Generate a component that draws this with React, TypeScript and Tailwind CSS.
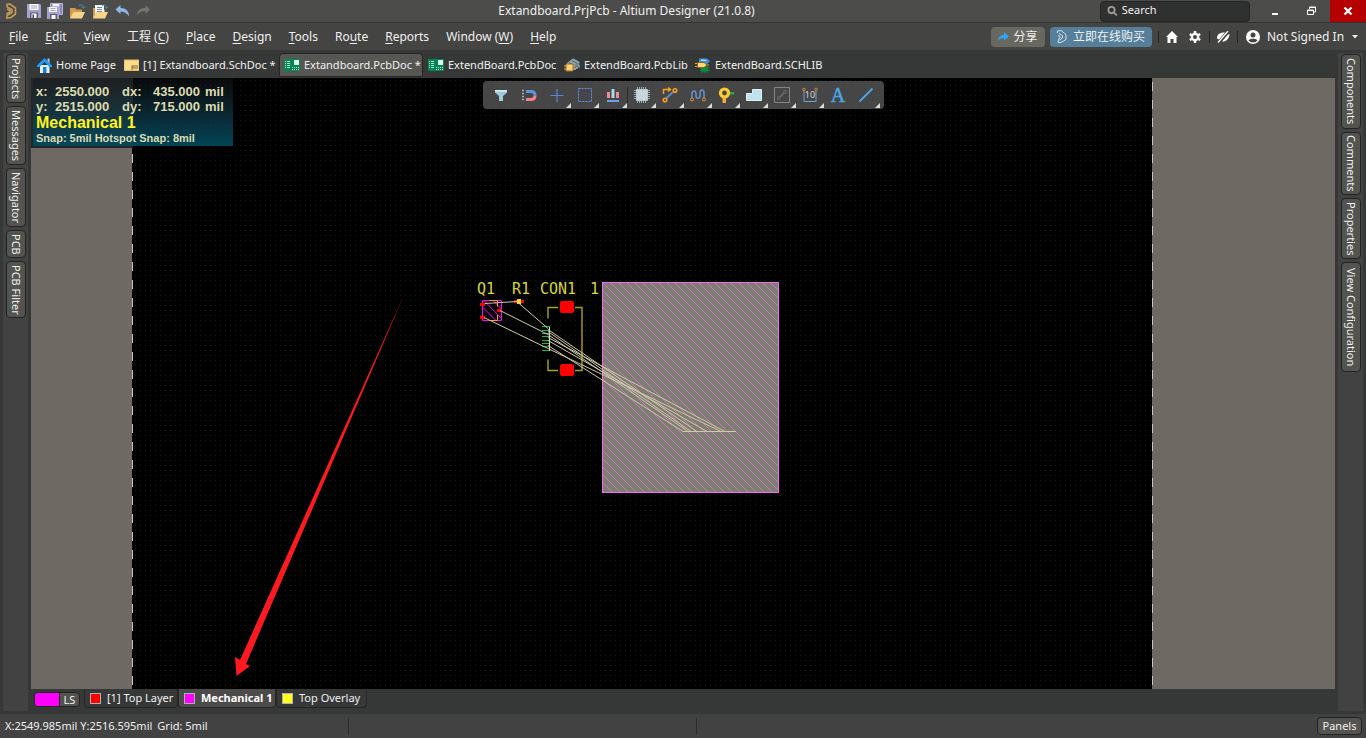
import { useState } from "react";
import type { ReactNode } from "react";
import clsx from "clsx";

const MENUS = [
  { pre: "", key: "F", post: "ile" },
  { pre: "", key: "E", post: "dit" },
  { pre: "", key: "V", post: "iew" },
  { pre: "工程 (", key: "C", post: ")" },
  { pre: "", key: "P", post: "lace" },
  { pre: "", key: "D", post: "esign" },
  { pre: "", key: "T", post: "ools" },
  { pre: "Ro", key: "u", post: "te" },
  { pre: "", key: "R", post: "eports" },
  { pre: "Window (", key: "W", post: ")" },
  { pre: "", key: "H", post: "elp" },
];

const LEFT_PANELS = [
  { label: "Projects", size: "h-[49px]" },
  { label: "Messages", size: "h-[59px]" },
  { label: "Navigator", size: "h-[59px]" },
  { label: "PCB", size: "h-[28px]" },
  { label: "PCB Filter", size: "h-[57px]" },
];

const RIGHT_PANELS = [
  { label: "Components", size: "h-[75px]" },
  { label: "Comments", size: "h-[63px]" },
  { label: "Properties", size: "h-[61px]" },
  { label: "View Configuration", size: "h-[110px]" },
];

const LAYERS = [
  { name: "[1] Top Layer", swatch: "bg-[#ff0000]", width: "w-[94px]" },
  { name: "Mechanical 1", swatch: "bg-[#ff00ff]", width: "w-[98px]" },
  { name: "Top Overlay", swatch: "bg-[#ffff1e]", width: "w-[91px]" },
];

/* ---------- title bar icons ---------- */

function AltiumLogo() {
  return (
    <svg width="12" height="16" viewBox="0 0 12 16" fill="none" stroke="#c69a57" strokeWidth="1.6">
      <path d="M2 4V1.500L5 1l5.500 4v6L6 14.500 2 15v-2.500l5-3V6.500L2 4" />
      <path d="M1.500 11l3.500-2V7.500L2 6" />
    </svg>
  );
}

function SaveIcon() {
  return (
    <svg width="14" height="14" viewBox="0 0 14 14">
      <path d="M0 0h13l1 1v13H0z" fill="#a3a1cf" />
      <path d="M2.500 0h9v6h-9z" fill="#f4f4f4" />
      <path d="M4 2h6M4 4h6" stroke="#a9a9b0" />
      <path d="M3 8.500h8V14H3z" fill="#5b5878" />
      <path d="M4.500 9.500h5V14h-5z" fill="#fff" />
      <path d="M5.500 10.500h1.500V14H5.500z" fill="#44415d" />
    </svg>
  );
}

function SaveAllIcon() {
  return (
    <svg width="16" height="16" viewBox="0 0 16 16">
      <path d="M3.500.5h12v11h-3V3.500h-9z" fill="#8886b8" stroke="#b7b5dc" />
      <path d="M5.500 1h7v2h-7z" fill="#f4f4f4" />
      <path d="M0 4h12v12H0z" fill="#a3a1cf" />
      <path d="M2 4h8v5H2z" fill="#f4f4f4" />
      <path d="M3.500 5.500h5M3.500 7.500h5" stroke="#a9a9b0" />
      <path d="M3 11h7v5H3z" fill="#5b5878" />
      <path d="M4.500 12h4v4h-4z" fill="#fff" />
    </svg>
  );
}

function FolderIcon({ withDoc = false }: { withDoc?: boolean }) {
  return (
    <svg width="17" height="15" viewBox="0 0 17 15">
      <path d="M1 4h5l1.500 1.500H13V14H1z" fill="#d79b4b" />
      {withDoc && (
        <>
          <path d="M3 1h9v9H3z" fill="#f5f5f5" />
          <path d="M5 3.500h5M5 5.500h5M5 7.500h5" stroke="#77889c" />
        </>
      )}
      <path d="M4.500 8H16l-3 6.500H1z" fill="#f7d488" />
      <path d="M10 1.500c3-1.500 4.500 0 4.500 2.500M12.500 3l2 1.500L16 2.500" fill="none" stroke="#4b8aa8" />
    </svg>
  );
}

function ArrowIcon({ redo = false }: { redo?: boolean }) {
  return (
    <svg width="15" height="12" viewBox="0 0 15 12">
      {redo ? (
        <path d="M14 4.500L9.500 0v3C4 3 1 5.500 1 10.500 3 7 6 6 9.500 6v3z" fill="#74746f" />
      ) : (
        <path d="M.5 4.500L5.500 0v3C11 3 14 6 14 11.500 12 8 9 6.500 5.500 6.500V9z" fill="#8fb9ec" />
      )}
    </svg>
  );
}

/* ---------- document tab icons ---------- */

function HomeTabIcon() {
  return (
    <svg width="15" height="15" viewBox="0 0 15 15">
      <path d="M10.500 0.500h2v5h-2z" fill="#b7c3cc" />
      <path d="M3 7h9.500v8H3z" fill="#dff0ff" />
      <path d="M7.500 0L0 7.500v1.500h2.500L7.500 4l5 5H15V7.500z" fill="#1d9bff" />
      <path d="M6 9h3.500v6H6z" fill="#1783e0" />
    </svg>
  );
}

function SchIcon() {
  return (
    <svg width="15" height="12" viewBox="0 0 15 12">
      <path d="M0 1h15v10.500H0z" fill="#f9dc8c" />
      <path d="M0 1h15v10.500H0z" fill="none" stroke="#e5b95f" />
      <path d="M8 7h6M8 9h6M8 6.500V11" stroke="#8a6b2c" />
    </svg>
  );
}

function PcbIcon() {
  return (
    <svg width="16" height="12" viewBox="0 0 16 12" shapeRendering="crispEdges">
      <path d="M0 0h16v12H0z" fill="#078456" />
      <path d="M1 2.500h1M3 2.500h3M1 4.500h1M3 4.500h3M1 6.500h1M3 6.500h3M1 8.500h1M3 8.500h3" stroke="#a5efc9" />
      <path d="M10 1h5v5h-5z" fill="#d8ffe9" />
      <path d="M8 8.500h1M10 8.500h1M12 8.500h1M14 8.500h1M8 10.500h1M10 10.500h1M12 10.500h1M14 10.500h1" stroke="#c0f8da" />
    </svg>
  );
}

function PcbLibIcon() {
  return (
    <svg width="16" height="14" viewBox="0 0 16 14">
      <path d="M3 5l6-4.500L15.500 4v3.500L9.500 11 3 8z" fill="#6f8792" />
      <path d="M3 5l6-4.500L15.500 4 9.500 7.500z" fill="#8fa5af" />
      <path d="M5 4.500l5 2.500M8 2.500l5 3" stroke="#4b5c64" />
      <path d="M11 10v2M13 9v2M15 7.500v2" stroke="#dfe8ec" />
      <path d="M2 6h7v7H2z" fill="#f8d27a" stroke="#9a6f23" />
      <path d="M0 8h2M0 11h2M9 8h2M9 11h2" stroke="#e6a93a" />
    </svg>
  );
}

function SchLibIcon() {
  return (
    <svg width="16" height="15" viewBox="0 0 16 15">
      <path d="M4 0.500h8l3 2.500-3 3H4z" fill="#3b8ee6" />
      <path d="M6 1.500h4l2 1.500H6z" fill="#b7dcff" />
      <path d="M6 8.500h7v5H6z" fill="#0c8a3f" />
      <path d="M5 10h10M5 12.500h10M7 7.500V15M9.500 7.500V15M12 7.500V15" stroke="#0c8a3f" />
      <path d="M2.500 4.500H9L12 7 9 9.500H2.500z" fill="#ffdb7a" stroke="#8e6315" />
      <path d="M0 5.500h2M0 8.500h2M12 7h2" stroke="#e6a93a" />
    </svg>
  );
}

const DOC_TABS: { name: string; icon: ReactNode; width: string }[] = [
  { name: "Home Page", icon: <HomeTabIcon />, width: "w-[87px]" },
  { name: "[1] Extandboard.SchDoc *", icon: <SchIcon />, width: "w-[160px]" },
  { name: "Extandboard.PcbDoc *", icon: <PcbIcon />, width: "w-[144px]" },
  { name: "ExtendBoard.PcbDoc", icon: <PcbIcon />, width: "w-[136px]" },
  { name: "ExtendBoard.PcbLib", icon: <PcbLibIcon />, width: "w-[131px]" },
  { name: "ExtendBoard.SCHLIB", icon: <SchLibIcon />, width: "w-[136px]" },
];

/* ---------- active bar ---------- */

const TOOLS: { label: string; more: boolean; art: ReactNode }[] = [
  {
    label: "Selection filter",
    more: false,
    art: (
      <>
        <path d="M2 3h12v2.500l-4 3.500v5H6V9L2 5.500z" fill="#9fcbd6" />
        <path d="M2 3h12v1.500H2z" fill="#d8f1f6" />
      </>
    ),
  },
  {
    label: "Snap",
    more: false,
    art: (
      <g fill="none">
        <path d="M1 3.500h2M1 6.500h2M1 9.500h2M1 12.500h2" stroke="#9db4bb" strokeWidth="1.500" />
        <path d="M5 4.500h5c4 0 4 3.500 4 4" stroke="#5f95de" strokeWidth="3" />
        <path d="M5 12.500h5c4 0 4-3.500 4-4" stroke="#ef8486" strokeWidth="3" />
      </g>
    ),
  },
  {
    label: "Move",
    more: true,
    art: <path d="M8 2v13M1.500 8.500h13M6 8.500h4M8 6.500v4" stroke="#5886d9" strokeWidth="1.200" />,
  },
  {
    label: "Select",
    more: true,
    art: <path d="M1.500 1.500h13v13h-13z" fill="none" stroke="#5f90ee" strokeDasharray="2 1" />,
  },
  {
    label: "Align",
    more: true,
    art: (
      <>
        <path d="M2 5h3v6H2zM11 5h3v6h-3z" fill="#f18a8c" />
        <path d="M6.500 2h3v9h-3z" fill="#a8dcea" />
        <path d="M2 13h12v2H2z" fill="#6e9ef0" />
      </>
    ),
  },
  {
    label: "Component",
    more: true,
    art: (
      <>
        <path
          d="M3.500 0v16M5.500 0v16M7.500 0v16M9.500 0v16M11.500 0v16M0 3.500h16M0 5.500h16M0 7.500h16M0 9.500h16M0 11.500h16"
          stroke="#8fb0ba"
        />
        <path d="M2.500 2.500h11v11h-11z" fill="#c9d5d8" stroke="#b5cad0" />
      </>
    ),
  },
  {
    label: "Route",
    more: true,
    art: (
      <g fill="none" stroke="#f5a11b" strokeWidth="1.500">
        <path d="M4.500 11L11 5" stroke="#5d89c0" strokeWidth="2" />
        <circle cx="3" cy="13" r="1.800" />
        <circle cx="13" cy="3.500" r="1.800" />
        <path d="M1.500 7V2.500h6M6 .5l2.500 2L6 4.500" />
      </g>
    ),
  },
  {
    label: "Tune length",
    more: true,
    art: (
      <g fill="none">
        <path d="M2 11V7c0-4 4-4 4 0v2c0 3 4 3 4 0V6c0-4 4-4 4 0v5" stroke="#6692d2" strokeWidth="1.500" />
        <circle cx="2" cy="12.500" r="1.500" stroke="#e2932f" />
        <circle cx="14" cy="12.500" r="1.500" stroke="#e2932f" />
      </g>
    ),
  },
  {
    label: "Via",
    more: true,
    art: (
      <>
        <path d="M10 5h6v2.500h-6z" fill="#2fa744" />
        <path d="M4.500 9h3.500v7H4.500z" fill="#f3a94b" />
        <circle cx="6.500" cy="6" r="4" fill="none" stroke="#ffcb2e" strokeWidth="3.200" />
      </>
    ),
  },
  {
    label: "Polygon",
    more: true,
    art: <path d="M.5 6.500h6v-4h9v11H.5z" fill="#bfe3ec" stroke="#dff3f7" />,
  },
  {
    label: "Room",
    more: true,
    art: (
      <g fill="none" stroke="#858585">
        <path d="M.5.5h15v15H.5z" />
        <path d="M6 10l4-4" stroke="#6e6e6e" strokeWidth="1.500" />
        <circle cx="4.800" cy="11.200" r="1.500" stroke="#6e6e6e" />
        <circle cx="11.200" cy="4.800" r="1.500" stroke="#6e6e6e" />
      </g>
    ),
  },
  {
    label: "Dimension",
    more: true,
    art: (
      <>
        <path d="M2 4v10.500h12V4" fill="none" stroke="#6d9fd8" />
        <circle cx="2" cy="2.500" r="1.300" fill="none" stroke="#d68c36" />
        <circle cx="14" cy="2.500" r="1.300" fill="none" stroke="#d68c36" />
        <text x="8" y="11" fontSize="9" textAnchor="middle" fill="#d6d6d6">
          10
        </text>
      </>
    ),
  },
  {
    label: "String",
    more: false,
    art: (
      <text
        x="8"
        y="15"
        fontSize="20"
        textAnchor="middle"
        fill="#4ba6e6"
        stroke="#4ba6e6"
        strokeWidth="0.500"
        className="font-['Liberation_Serif',serif]"
      >
        A
      </text>
    ),
  },
  {
    label: "Line",
    more: true,
    art: <path d="M1.500 14.500l13-13" stroke="#4ba6e6" strokeWidth="1.800" />,
  },
];

function ActiveBar() {
  return (
    <div className="absolute inset-x-0 top-[3px] flex justify-center">
      <div className="flex h-7 items-center rounded bg-[#464646] px-1">
        {TOOLS.map((tool, i) => (
          <div key={tool.label} className="flex h-full items-center">
            {i === 5 && <span className="h-4 w-px bg-[#2a2a2a]" />}
            <button type="button" aria-label={tool.label} className="relative flex h-full w-7 items-center justify-center">
              <svg width="16" height="16" viewBox="0 0 16 16" className="overflow-visible">
                {tool.art}
              </svg>
              {tool.more && (
                <svg width="5" height="5" viewBox="0 0 5 5" className="absolute right-0 bottom-px">
                  <path d="M5 0v5H0z" fill="#dcdcd4" />
                </svg>
              )}
            </button>
          </div>
        ))}
      </div>
    </div>
  );
}

/* ---------- board ---------- */

// ratsnest: connector pin end -> pad end
const RATS = [
  [485, 303, 517, 301],
  [518, 302, 548, 328],
  [500, 310, 548, 334],
  [484, 317, 548, 348],
  [548, 329, 697, 431],
  [548, 331, 691, 431],
  [548, 334, 688, 431],
  [548, 337, 725, 431],
  [548, 340, 707, 431],
  [548, 348, 721, 431],
  [548, 345, 683, 431],
  [683, 431, 736, 431],
];

const PINS = [326, 330, 333, 336, 340, 343, 346, 350];

function Board() {
  return (
    <svg
      width="1304"
      height="611"
      viewBox="31 78 1304 611"
      className="pointer-events-none absolute top-0 left-0 max-w-none font-['DejaVu_Sans_Mono',monospace]"
    >
      <defs>
        <pattern id="hatch" width="8" height="8" patternUnits="userSpaceOnUse">
          <path d="M-1 -1L9 9M-1 7L1 9M7 -1L9 1" stroke="#f27ced" strokeWidth="0.600" />
        </pattern>
      </defs>

      <rect x="602.5" y="282.5" width="176" height="210" fill="#7f7c74" />
      <rect x="602.5" y="282.5" width="176" height="210" fill="url(#hatch)" stroke="#f56cf0" />

      <g fill="#d8d436" fontSize="15">
        <text x="477" y="294">Q1</text>
        <text x="512" y="294">R1</text>
        <text x="540" y="294">CON1</text>
        <text x="590" y="294">1</text>
      </g>

      {/* Q1 */}
      <path
        d="M482.500 300.500h19v20h-19zM482.500 307l13.500 13.500M484 300.500l17.500 18M493 300.500l8.500 8.500"
        fill="none"
        stroke="#ff00ff"
      />
      <path d="M489 300.500h8.500v6M497.500 315v5.500h-8.500" fill="none" stroke="#f0a030" />
      <path d="M480 303h5v3h-5zM497 309h5v3h-5zM480 316h5v3h-5z" fill="#ff0000" />

      {/* R1 */}
      <path d="M514 300h10v3h-10z" fill="#ff0000" />
      <path d="M517 299h4v5h-4z" fill="#e8e030" />

      {/* CON1 */}
      <path
        d="M558 307.500h-10v11M575 307.500h7v63h-7M558 370.500h-10v-11"
        fill="none"
        stroke="#aaa21e"
        strokeWidth="1.400"
      />
      <rect x="560" y="301" width="14" height="12" rx="2" fill="#ff0000" />
      <rect x="560" y="364" width="14" height="12" rx="2" fill="#ff0000" />
      {PINS.map((y) => (
        <path key={y} d={`M542 ${y}.500h8`} stroke="#10c044" />
      ))}
      <path d="M549.500 327v24" stroke="#e8e2b4" />

      <g stroke="#cfcaa4">
        {RATS.map(([x1, y1, x2, y2], i) => (
          <path key={i} d={`M${x1} ${y1}.500L${x2} ${y2}.500`} />
        ))}
      </g>

      {/* arrow to the layer tabs */}
      <path d="M404 295L246 664l4 2-13.500 10L235 657l5 3z" fill="#ff1a20" />
    </svg>
  );
}

function HeadsUp() {
  return (
    <div className="absolute top-0 left-0 pr-px pb-0.5 pl-0.5">
      <div className="absolute inset-y-0 left-0 w-[102px] bg-[#262626]" />
      <div className="relative h-[68px] w-[200px] bg-linear-to-b from-[#101418]/40 to-[#004c60]/90 pt-1.5 pl-[3px] font-['Liberation_Sans',sans-serif] font-bold whitespace-nowrap text-[#dedbb0]">
        <div className="grid grid-cols-[19px_67px_31px_52px_auto] text-[13px] leading-[15px]">
          <span>x:</span>
          <span>2550.000</span>
          <span>dx:</span>
          <span>435.000</span>
          <span>mil</span>
          <span>y:</span>
          <span>2515.000</span>
          <span>dy:</span>
          <span>715.000</span>
          <span>mil</span>
        </div>
        <div className="text-base leading-[17px] text-[#fff31e]">Mechanical 1</div>
        <div className="text-[11px] leading-[14px]">Snap: 5mil Hotspot Snap: 8mil</div>
      </div>
    </div>
  );
}

function SidePanel({ panels }: { panels: { label: string; size: string }[] }) {
  return (
    <aside className="my-[3px] flex w-[25px] shrink-0 flex-col items-center gap-[3px] bg-[#424242] pt-px">
      {panels.map((panel) => (
        <button
          key={panel.label}
          type="button"
          className={clsx(
            "flex w-5 items-center justify-center rounded border border-[#232323] bg-[#53534f] text-[11px] leading-4 whitespace-nowrap [writing-mode:vertical-rl]",
            panel.size
          )}
        >
          {panel.label}
        </button>
      ))}
    </aside>
  );
}

export default function App() {
  const [activeDoc, setActiveDoc] = useState(2);
  const [activeLayer, setActiveLayer] = useState(1);

  return (
    <div className="flex min-h-screen flex-col overflow-hidden bg-[#363837] font-['Noto_Sans','Noto_Sans_CJK_SC',sans-serif] text-[#f0f0f0]">
      {/* Title bar */}
      <header className="flex h-[23px] items-center border-b border-[#333] bg-[#4c4c4a]">
        <div className="flex flex-1 items-center gap-2 pl-[5px]">
          <AltiumLogo />
          <div className="flex items-center gap-1.5 pl-0.5">
            <button type="button" aria-label="Save"><SaveIcon /></button>
            <button type="button" aria-label="Save all"><SaveAllIcon /></button>
            <button type="button" aria-label="Open"><FolderIcon /></button>
            <button type="button" aria-label="Open project"><FolderIcon withDoc /></button>
            <button type="button" aria-label="Undo"><ArrowIcon /></button>
            <button type="button" aria-label="Redo"><ArrowIcon redo /></button>
          </div>
        </div>
        <h1 className="pr-2 text-center text-xs whitespace-nowrap">Extandboard.PrjPcb - Altium Designer (21.0.8)</h1>
        <div className="flex h-full flex-1 items-center justify-end pl-[110px]">
          <label className="mr-[7px] flex h-[21px] w-[150px] items-center gap-1 rounded border border-[#252525] bg-[#2f3030] pl-1.5">
            <svg width="12" height="12" viewBox="0 0 12 12" fill="none" stroke="#a09c96" strokeWidth="2">
              <circle cx="5" cy="5" r="3.500" />
              <path d="M7.500 7.500l3.500 3.500" />
            </svg>
            <input
              type="text"
              aria-label="Search"
              placeholder="Search"
              className="w-full bg-transparent pb-px text-[11px] outline-none placeholder:text-[#f0f0f0]"
            />
          </label>
          <button type="button" aria-label="Minimize" className="flex h-full w-9 items-center justify-center">
            <svg width="12" height="12" viewBox="0 0 12 12"><path d="M3 8h6v2H3z" fill="#fff" /></svg>
          </button>
          <button type="button" aria-label="Restore" className="flex h-full w-[37px] items-center justify-center">
            <svg width="10" height="10" viewBox="0 0 10 10" fill="none" stroke="#fff">
              <path d="M2.500 3V1h6v5H7M2.500 1.500h6M.5 4h6v4.500h-6zM.5 4.500h6" />
            </svg>
          </button>
          <button type="button" aria-label="Close" className="flex h-full w-9 items-center justify-center bg-[#b50000]">
            <svg width="10" height="10" viewBox="0 0 10 10" stroke="#fff" strokeWidth="2.200">
              <path d="M1.500 1.500l7 7M8.500 1.500l-7 7" />
            </svg>
          </button>
        </div>
      </header>

      {/* Menu bar */}
      <nav className="flex h-[27px] items-center justify-between bg-[#444443] text-xs">
        <div className="flex items-center gap-[17px] pl-[9px]">
          {MENUS.map((menu) => (
            <button key={menu.key + menu.post} type="button" className="whitespace-nowrap">
              {menu.pre}
              <span className="underline underline-offset-2">{menu.key}</span>
              {menu.post}
            </button>
          ))}
        </div>
        <div className="flex items-center pr-2">
          <button type="button" className="mr-[5px] flex h-5 w-[54px] items-center justify-center gap-1 rounded bg-[#686760]">
            <svg width="11" height="10" viewBox="0 0 11 10">
              <path d="M6 0l5 4.500L6 8.500V6C3 6 1.500 7 0 9c0-4 2.500-6 6-6z" fill="#2ea6f5" />
            </svg>
            分享
          </button>
          <button type="button" className="mr-1.5 flex h-5 w-[102px] items-center justify-center gap-1.5 rounded bg-[#557f9b]">
            <svg width="10" height="13" viewBox="0 0 10 13" fill="none" stroke="#d3dfe6">
              <path d="M.5 3V1L4 .5l5 4v5L4 12.500H1V11l4.500-3V5.500L2 3.500M1 9.500l2-1.500V6.500L1 5.500" />
            </svg>
            立即在线购买
          </button>
          <span className="mr-[7px] h-3 w-px bg-[#242424]" />
          <button type="button" aria-label="Home" className="mr-[11px]">
            <svg width="12" height="12" viewBox="0 0 12 12"><path d="M6 0l6 6h-1.500v6H7.500V8h-3v4H1.500V6H0z" fill="#fff" /></svg>
          </button>
          <button type="button" aria-label="Settings" className="mr-2">
            <svg width="12" height="12" viewBox="0 0 12 12" fill="none" stroke="#fff">
              <circle cx="6" cy="6" r="3.200" strokeWidth="2.400" />
              <path d="M6 0v2M6 10v2M.8 3l1.700 1M9.500 8l1.700 1M.8 9l1.700-1M9.500 4l1.700-1" strokeWidth="2.400" />
            </svg>
          </button>
          <span className="mr-1.5 h-3 w-px bg-[#242424]" />
          <button type="button" aria-label="Notifications off" className="mr-[7px]">
            <svg width="14" height="12" viewBox="0 0 14 12">
              <path d="M1 7.500c0-4.500 3-6 8-6L3 8.500zM6 10.500L12 3.500l1.500-.5c0 4-3 7-5.500 7.500z" fill="#fff" />
              <path d="M2 11.500L12 0" stroke="#fff" strokeWidth="1.300" />
            </svg>
          </button>
          <span className="mr-2 h-3 w-px bg-[#242424]" />
          <button type="button" className="flex items-center">
            <svg width="14" height="14" viewBox="0 0 14 14" className="mr-[7px]">
              <circle cx="7" cy="7" r="7" fill="#fff" />
              <circle cx="7" cy="5" r="2.500" fill="#444443" />
              <path d="M2.500 10.500c1-2.500 8-2.500 9 0C9.500 13 4.500 13 2.500 10.500z" fill="#444443" />
            </svg>
            <span className="w-[81px] text-left whitespace-nowrap">Not Signed In</span>
            <svg width="6" height="4" viewBox="0 0 6 4" className="ml-1"><path d="M0 0h6L3 3.500z" fill="#eee" /></svg>
          </button>
        </div>
      </nav>

      {/* Workspace */}
      <div className="flex flex-1 px-[3px]">
        <SidePanel panels={LEFT_PANELS} />

        <main className="mx-[3px] flex min-w-0 flex-1 flex-col">
          <div role="tablist" className="flex h-7 items-end pb-px pl-px">
            {DOC_TABS.map((tab, i) => (
              <button
                key={tab.name}
                type="button"
                role="tab"
                aria-selected={i === activeDoc}
                onClick={() => setActiveDoc(i)}
                className={clsx(
                  "flex h-6 shrink-0 items-center gap-1 rounded-t border pl-1 text-[11px] whitespace-nowrap",
                  tab.width,
                  i === activeDoc ? "border-[#252525] bg-[#565652]" : "border-transparent"
                )}
              >
                {tab.icon}
                {tab.name}
              </button>
            ))}
          </div>

          <div className="relative flex flex-1 overflow-hidden bg-[#6e6962]">
            <div className="w-[101px]" />
            <div className="w-px bg-[repeating-linear-gradient(#000_0_4px,#c8c4ba_4px_13px,#000_13px_18px)]" />
            <div className="flex-1 bg-black bg-[radial-gradient(circle,#161616,transparent_1px)] bg-[size:5px_5px]" />
            <div className="w-px bg-[repeating-linear-gradient(#6e6962_0_4px,#c8c4ba_4px_13px,#6e6962_13px_18px)]" />
            <div className="w-[182px]" />
            <HeadsUp />
            <Board />
            <ActiveBar />
          </div>

          <div className="flex h-[25px] items-start text-[11px]">
            <button type="button" className="mt-[3px] ml-[3px] flex h-[15px] w-[46px] items-stretch overflow-hidden rounded border border-[#222] bg-[#53534f] leading-[13px]">
              <span className="w-[25px] border-r border-[#222] bg-[#ff00ff]" />
              <span className="flex-1 text-center">LS</span>
            </button>
            <div className="ml-1 flex">
              {LAYERS.map((layer, i) => (
                <button
                  key={layer.name}
                  type="button"
                  onClick={() => setActiveLayer(i)}
                  className={clsx(
                    "flex h-[19px] items-center gap-1.5 rounded-b border border-t-0 border-[#262626] pl-[5px] whitespace-nowrap",
                    layer.width,
                    i === activeLayer && "bg-[#4b4b4a] font-bold text-white"
                  )}
                >
                  <span className={clsx("size-[11px] shrink-0 border border-[#b0b0b0]", layer.swatch)} />
                  {layer.name}
                </button>
              ))}
            </div>
          </div>
        </main>

        <SidePanel panels={RIGHT_PANELS} />
      </div>

      {/* Status bar */}
      <footer className="flex h-6 items-center bg-[#424242] text-[11px]">
        <div className="flex w-[348px] gap-[5px] pl-[5px] whitespace-nowrap">
          <span>X:2549.985mil Y:2516.595mil</span>
          <span>Grid: 5mil</span>
        </div>
        <span className="h-[17px] w-px bg-[#2e2e2e]" />
        <span className="ml-[347px] h-[17px] w-px bg-[#2e2e2e]" />
        <button type="button" className="mr-1 ml-auto flex h-[18px] w-[45px] items-center justify-center rounded border border-[#222] bg-[#53534f]">
          Panels
        </button>
      </footer>
    </div>
  );
}
